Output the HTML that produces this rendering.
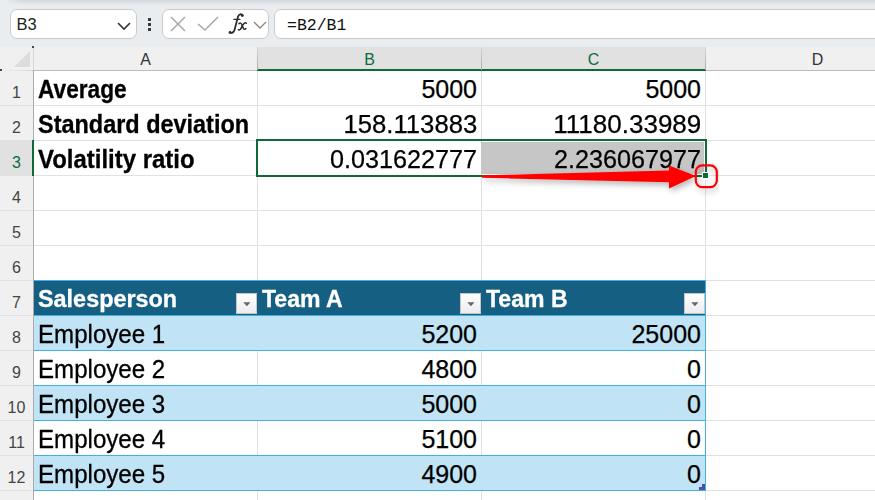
<!DOCTYPE html>
<html><head><meta charset="utf-8">
<style>
html,body{margin:0;padding:0;}
body{width:875px;height:500px;overflow:hidden;position:relative;background:#fff;font-family:"Liberation Sans",sans-serif;}
div,svg{position:absolute;}
.box{background:#fff;border:1px solid #c9cccf;border-radius:7px;box-sizing:border-box;}
.colh{top:48px;height:23px;font-size:16px;line-height:23px;text-align:center;color:#333;}
.rowh{left:0;width:33px;font-size:16px;text-align:center;color:#444;}
.t{white-space:nowrap;color:#000;}
.b{font-weight:bold;}
</style></head><body>

<div style="left:0;top:0;width:875px;height:47px;background:#e9edf0"></div>
<div style="left:6px;top:0;width:869px;height:5px;background:linear-gradient(#d3d7db,#e9edf0);-webkit-mask-image:linear-gradient(90deg,transparent,#000 14px)"></div>
<div class="box" style="left:10px;top:9px;width:127px;height:30px;"></div>
<div class="t" style="left:16.5px;top:14px;font-size:16.5px;line-height:20px;color:#222;">B3</div>
<svg style="left:116px;top:20px" width="16" height="12"><path d="M2 3 L8 9 L14 3" fill="none" stroke="#333" stroke-width="1.6"/></svg>
<div style="left:148px;top:18px;width:3px;height:3px;background:#3a3a3a"></div>
<div style="left:148px;top:23px;width:3px;height:3px;background:#3a3a3a"></div>
<div style="left:148px;top:28px;width:3px;height:3px;background:#3a3a3a"></div>
<div class="box" style="left:162px;top:9px;width:107px;height:30px;"></div>
<svg style="left:168px;top:14px" width="100" height="22">
<path d="M3 3 L17 17 M17 3 L3 17" fill="none" stroke="#a8a8a8" stroke-width="1.5"/>
<path d="M30 10 L37 16 L50 3" fill="none" stroke="#a8a8a8" stroke-width="1.5"/>
<path d="M86 8 L92 14 L98 8" fill="none" stroke="#8a8a8a" stroke-width="1.3"/>
</svg>
<svg style="left:226px;top:12px" width="24" height="24"><g fill="none" stroke="#2b2b2b" stroke-linecap="round">
<path d="M16.6 3.4 C15.4 1.6 12.8 1.9 12 4.8 L8.6 17.6 C8 20.2 6 21.4 4.2 20.6" stroke-width="1.8"/>
<path d="M7.9 7.4 H13.9" stroke-width="1.3"/>
<path d="M12.9 11.8 C14.2 10.6 15.2 11 15.8 12.6 L17.4 16.4 C18 17.7 19 17.6 19.9 16.6" stroke-width="1.5"/>
<path d="M20.4 11.2 C19.2 10.4 18.2 10.9 17.2 12.4 L14.9 16.5 C14 18 13.2 18.2 12.4 17.7" stroke-width="1.5"/>
</g><circle cx="16.3" cy="3.6" r="1.4" fill="#2b2b2b"/><circle cx="4" cy="20.4" r="1.4" fill="#2b2b2b"/></svg>
<div class="box" style="left:274px;top:9px;width:610px;height:30px;"></div>
<div class="t" style="left:287px;top:16px;font-family:'Liberation Mono',monospace;font-size:16.5px;line-height:20px;color:#111;">=B2/B1</div>
<div style="left:0;top:47px;width:875px;height:24px;background:#f0f0f0"></div>
<div style="left:258px;top:47px;width:447px;height:23px;background:#e1e1e1"></div>
<div style="left:0;top:71px;width:33px;height:429px;background:#f0f0f0"></div>
<div style="left:0;top:141px;width:33px;height:34px;background:#e1e1e1"></div>
<svg style="left:14px;top:51px" width="17" height="16"><path d="M16 0 L16 16 L0 16 Z" fill="#dcdcdc"/></svg>
<div style="left:257px;top:71px;width:1px;height:429px;background:#e1e1e1"></div>
<div style="left:481px;top:71px;width:1px;height:429px;background:#e1e1e1"></div>
<div style="left:705px;top:71px;width:1px;height:429px;background:#e1e1e1"></div>
<div style="left:34px;top:105px;width:841px;height:1px;background:#e1e1e1"></div>
<div style="left:34px;top:140px;width:841px;height:1px;background:#e1e1e1"></div>
<div style="left:34px;top:175px;width:841px;height:1px;background:#e1e1e1"></div>
<div style="left:34px;top:210px;width:841px;height:1px;background:#e1e1e1"></div>
<div style="left:34px;top:245px;width:841px;height:1px;background:#e1e1e1"></div>
<div style="left:34px;top:280px;width:841px;height:1px;background:#e1e1e1"></div>
<div style="left:34px;top:315px;width:841px;height:1px;background:#e1e1e1"></div>
<div style="left:34px;top:350px;width:841px;height:1px;background:#e1e1e1"></div>
<div style="left:34px;top:385px;width:841px;height:1px;background:#e1e1e1"></div>
<div style="left:34px;top:420px;width:841px;height:1px;background:#e1e1e1"></div>
<div style="left:34px;top:455px;width:841px;height:1px;background:#e1e1e1"></div>
<div style="left:34px;top:490px;width:841px;height:1px;background:#e1e1e1"></div>
<div style="left:0;top:105px;width:33px;height:1px;background:#e2e2e2"></div>
<div style="left:0;top:140px;width:33px;height:1px;background:#e2e2e2"></div>
<div style="left:0;top:175px;width:33px;height:1px;background:#e2e2e2"></div>
<div style="left:0;top:210px;width:33px;height:1px;background:#e2e2e2"></div>
<div style="left:0;top:245px;width:33px;height:1px;background:#e2e2e2"></div>
<div style="left:0;top:280px;width:33px;height:1px;background:#e2e2e2"></div>
<div style="left:0;top:315px;width:33px;height:1px;background:#e2e2e2"></div>
<div style="left:0;top:350px;width:33px;height:1px;background:#e2e2e2"></div>
<div style="left:0;top:385px;width:33px;height:1px;background:#e2e2e2"></div>
<div style="left:0;top:420px;width:33px;height:1px;background:#e2e2e2"></div>
<div style="left:0;top:455px;width:33px;height:1px;background:#e2e2e2"></div>
<div style="left:0;top:490px;width:33px;height:1px;background:#e2e2e2"></div>
<div style="left:34px;top:281px;width:671px;height:34px;background:#156082"></div>
<div style="left:34px;top:316px;width:671px;height:34px;background:#c0e4f5"></div>
<div style="left:34px;top:386px;width:671px;height:34px;background:#c0e4f5"></div>
<div style="left:34px;top:456px;width:671px;height:34px;background:#c0e4f5"></div>
<div style="left:34px;top:280px;width:672px;height:1px;background:#44b0e0"></div>
<div style="left:34px;top:315px;width:672px;height:1px;background:#44b0e0"></div>
<div style="left:34px;top:350px;width:672px;height:1px;background:#44b0e0"></div>
<div style="left:34px;top:385px;width:672px;height:1px;background:#44b0e0"></div>
<div style="left:34px;top:420px;width:672px;height:1px;background:#44b0e0"></div>
<div style="left:34px;top:455px;width:672px;height:1px;background:#44b0e0"></div>
<div style="left:34px;top:490px;width:672px;height:1px;background:#44b0e0"></div>
<div style="left:705px;top:280px;width:1px;height:211px;background:#44b0e0"></div>
<svg style="left:699px;top:484px" width="6" height="6"><path d="M3 0 H6 V6 H0 V3 H3 Z" fill="#4b4fa8"/></svg>
<div style="left:236px;top:293px;width:21px;height:21px;box-sizing:border-box;border:1px solid #c5c5c5;background:linear-gradient(#ffffff,#ececf0)"></div>
<svg style="left:243px;top:302px" width="8" height="5"><path d="M0.3 0.3 H7.5 L3.9 4.3 Z" fill="#666"/></svg>
<div style="left:460px;top:293px;width:21px;height:21px;box-sizing:border-box;border:1px solid #c5c5c5;background:linear-gradient(#ffffff,#ececf0)"></div>
<svg style="left:467px;top:302px" width="8" height="5"><path d="M0.3 0.3 H7.5 L3.9 4.3 Z" fill="#666"/></svg>
<div style="left:684px;top:293px;width:21px;height:21px;box-sizing:border-box;border:1px solid #c5c5c5;background:linear-gradient(#ffffff,#ececf0)"></div>
<svg style="left:691px;top:302px" width="8" height="5"><path d="M0.3 0.3 H7.5 L3.9 4.3 Z" fill="#666"/></svg>
<div style="left:0;top:70px;width:875px;height:1px;background:#bcbcbc"></div>
<div style="left:257px;top:69px;width:449px;height:2px;background:#0e6b38"></div>
<div style="left:257px;top:47px;width:1px;height:23px;background:linear-gradient(#d6d6d6,#a9a9a9)"></div>
<div style="left:481px;top:47px;width:1px;height:23px;background:linear-gradient(#d6d6d6,#a9a9a9)"></div>
<div style="left:705px;top:47px;width:1px;height:23px;background:linear-gradient(#d6d6d6,#a9a9a9)"></div>
<div style="left:0;top:70px;width:33px;height:1px;background:linear-gradient(90deg,#eeeeee,#d6d6d6)"></div>
<div style="left:33px;top:47px;width:1px;height:23px;background:#d9d9d9"></div>
<div style="left:33px;top:70px;width:1px;height:430px;background:#ababab"></div>
<div style="left:32px;top:46px;width:2px;height:2px;background:#111;border-radius:1px"></div>
<div style="left:0;top:69px;width:2px;height:2px;background:#111;border-radius:1px"></div>
<div style="left:32px;top:140px;width:2px;height:36px;background:#0e6b38"></div>
<div class="colh" style="left:34px;width:223px;color:#333">A</div>
<div class="colh" style="left:258px;width:223px;color:#0e6b38">B</div>
<div class="colh" style="left:482px;width:223px;color:#0e6b38">C</div>
<div class="colh" style="left:706px;width:223px;color:#333">D</div>
<div class="rowh" style="top:76px;height:34px;line-height:34px;color:#444">1</div>
<div class="rowh" style="top:111px;height:34px;line-height:34px;color:#444">2</div>
<div class="rowh" style="top:146px;height:34px;line-height:34px;color:#0e6b38">3</div>
<div class="rowh" style="top:181px;height:34px;line-height:34px;color:#444">4</div>
<div class="rowh" style="top:216px;height:34px;line-height:34px;color:#444">5</div>
<div class="rowh" style="top:251px;height:34px;line-height:34px;color:#444">6</div>
<div class="rowh" style="top:286px;height:34px;line-height:34px;color:#444">7</div>
<div class="rowh" style="top:321px;height:34px;line-height:34px;color:#444">8</div>
<div class="rowh" style="top:356px;height:34px;line-height:34px;color:#444">9</div>
<div class="rowh" style="top:391px;height:34px;line-height:34px;color:#444">10</div>
<div class="rowh" style="top:426px;height:34px;line-height:34px;color:#444">11</div>
<div class="rowh" style="top:461px;height:34px;line-height:34px;color:#444">12</div>
<div style="left:481px;top:142px;width:223px;height:32px;background:#c6c6c6"></div>
<div class="t b" style="left:38px;top:69.5px;height:34px;line-height:38px;font-size:25px;color:#000;transform:scaleX(0.907);transform-origin:0 0;-webkit-text-stroke:0.3px #000">Average</div>
<div class="t b" style="left:38px;top:104.5px;height:34px;line-height:38px;font-size:25px;color:#000;transform:scaleX(0.938);transform-origin:0 0;-webkit-text-stroke:0.3px #000">Standard deviation</div>
<div class="t b" style="left:38px;top:139.5px;height:34px;line-height:38px;font-size:25px;color:#000;transform:scaleX(0.958);transform-origin:0 0;-webkit-text-stroke:0.3px #000">Volatility ratio</div>
<div class="t" style="right:398px;top:70px;height:34px;line-height:38px;font-size:25px;color:#000;transform:scaleX(1.0);transform-origin:100% 0;-webkit-text-stroke:0.25px #000">5000</div>
<div class="t" style="right:174px;top:70px;height:34px;line-height:38px;font-size:25px;color:#000;transform:scaleX(1.0);transform-origin:100% 0;-webkit-text-stroke:0.25px #000">5000</div>
<div class="t" style="right:398px;top:105px;height:34px;line-height:38px;font-size:25px;color:#000;transform:scaleX(1.027);transform-origin:100% 0;-webkit-text-stroke:0.25px #000">158.113883</div>
<div class="t" style="right:174px;top:105px;height:34px;line-height:38px;font-size:25px;color:#000;transform:scaleX(1.04);transform-origin:100% 0;-webkit-text-stroke:0.25px #000">11180.33989</div>
<div class="t" style="right:398px;top:140px;height:34px;line-height:38px;font-size:25px;color:#000;transform:scaleX(1.007);transform-origin:100% 0;-webkit-text-stroke:0.25px #000">0.031622777</div>
<div class="t" style="right:174px;top:140px;height:34px;line-height:38px;font-size:25px;color:#000;transform:scaleX(1.007);transform-origin:100% 0;-webkit-text-stroke:0.25px #000">2.236067977</div>
<div class="t b" style="left:38px;top:280px;height:34px;line-height:38px;font-size:24px;color:#fff;transform:scaleX(0.975);transform-origin:0 0;-webkit-text-stroke:0.3px #fff">Salesperson</div>
<div class="t b" style="left:262px;top:280px;height:34px;line-height:38px;font-size:24px;color:#fff;transform:scaleX(0.96);transform-origin:0 0;-webkit-text-stroke:0.3px #fff">Team A</div>
<div class="t b" style="left:486px;top:280px;height:34px;line-height:38px;font-size:24px;color:#fff;transform:scaleX(0.96);transform-origin:0 0;-webkit-text-stroke:0.3px #fff">Team B</div>
<div class="t " style="left:38px;top:314.5px;height:34px;line-height:38px;font-size:25px;color:#000;transform:scaleX(0.964);transform-origin:0 0;-webkit-text-stroke:0.3px #000">Employee 1</div>
<div class="t" style="right:398px;top:315px;height:34px;line-height:38px;font-size:25px;color:#000;transform:scaleX(1.0);transform-origin:100% 0;-webkit-text-stroke:0.25px #000">5200</div>
<div class="t" style="right:174px;top:315px;height:34px;line-height:38px;font-size:25px;color:#000;transform:scaleX(1.0);transform-origin:100% 0;-webkit-text-stroke:0.25px #000">25000</div>
<div class="t " style="left:38px;top:349.5px;height:34px;line-height:38px;font-size:25px;color:#000;transform:scaleX(0.964);transform-origin:0 0;-webkit-text-stroke:0.3px #000">Employee 2</div>
<div class="t" style="right:398px;top:350px;height:34px;line-height:38px;font-size:25px;color:#000;transform:scaleX(1.0);transform-origin:100% 0;-webkit-text-stroke:0.25px #000">4800</div>
<div class="t" style="right:174px;top:350px;height:34px;line-height:38px;font-size:25px;color:#000;transform:scaleX(1.0);transform-origin:100% 0;-webkit-text-stroke:0.25px #000">0</div>
<div class="t " style="left:38px;top:384.5px;height:34px;line-height:38px;font-size:25px;color:#000;transform:scaleX(0.964);transform-origin:0 0;-webkit-text-stroke:0.3px #000">Employee 3</div>
<div class="t" style="right:398px;top:385px;height:34px;line-height:38px;font-size:25px;color:#000;transform:scaleX(1.0);transform-origin:100% 0;-webkit-text-stroke:0.25px #000">5000</div>
<div class="t" style="right:174px;top:385px;height:34px;line-height:38px;font-size:25px;color:#000;transform:scaleX(1.0);transform-origin:100% 0;-webkit-text-stroke:0.25px #000">0</div>
<div class="t " style="left:38px;top:419.5px;height:34px;line-height:38px;font-size:25px;color:#000;transform:scaleX(0.964);transform-origin:0 0;-webkit-text-stroke:0.3px #000">Employee 4</div>
<div class="t" style="right:398px;top:420px;height:34px;line-height:38px;font-size:25px;color:#000;transform:scaleX(1.0);transform-origin:100% 0;-webkit-text-stroke:0.25px #000">5100</div>
<div class="t" style="right:174px;top:420px;height:34px;line-height:38px;font-size:25px;color:#000;transform:scaleX(1.0);transform-origin:100% 0;-webkit-text-stroke:0.25px #000">0</div>
<div class="t " style="left:38px;top:454.5px;height:34px;line-height:38px;font-size:25px;color:#000;transform:scaleX(0.964);transform-origin:0 0;-webkit-text-stroke:0.3px #000">Employee 5</div>
<div class="t" style="right:398px;top:455px;height:34px;line-height:38px;font-size:25px;color:#000;transform:scaleX(1.0);transform-origin:100% 0;-webkit-text-stroke:0.25px #000">4900</div>
<div class="t" style="right:174px;top:455px;height:34px;line-height:38px;font-size:25px;color:#000;transform:scaleX(1.0);transform-origin:100% 0;-webkit-text-stroke:0.25px #000">0</div>
<div style="left:256px;top:139px;width:451px;height:38px;box-sizing:border-box;border:2px solid #0e6b38"></div>
<div style="left:702px;top:172px;width:7px;height:7px;background:#fff"></div>
<div style="left:703px;top:173px;width:5px;height:5px;background:#0e6b38"></div>
<svg style="left:470px;top:155px" width="270" height="45">
<defs><filter id="sh" x="-10%" y="-50%" width="120%" height="200%"><feGaussianBlur in="SourceAlpha" stdDeviation="3"/><feOffset dx="2" dy="3"/><feComponentTransfer><feFuncA type="linear" slope="0.3"/></feComponentTransfer><feMerge><feMergeNode/><feMergeNode in="SourceGraphic"/></feMerge></filter></defs>
<path filter="url(#sh)" d="M12 20.3 L199 15.6 L199 10.4 L226 21 L199 33.4 L199 27.2 L12 22.8 Z" fill="#ff0000"/>
<rect filter="url(#sh)" x="225.8" y="10.3" width="21" height="21.8" rx="6.5" ry="6.5" fill="none" stroke="#ff0000" stroke-width="2.2"/>
</svg>
</body></html>
